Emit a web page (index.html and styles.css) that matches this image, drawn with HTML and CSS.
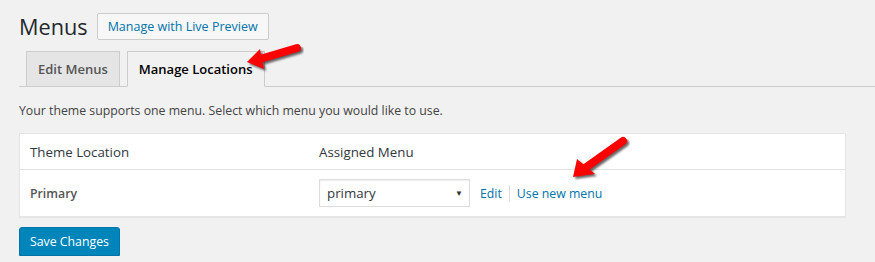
FILE: index.html
```html
<!DOCTYPE html>
<html>
<head>
    <meta charset="utf-8"/>
    <title>Menus</title>
    <link rel="stylesheet" href="styles.css">
</head>
<body>
    <div class="wrap">
        <div class="title-row">
            <h1>Menus</h1>
            <button class="btn-secondary">Manage with Live Preview</button>
        </div>
        <div class="nav-tabs">
            <a class="nav-tab">Edit Menus</a>
            <a class="nav-tab active">Manage Locations</a>
            <svg class="arrow arrow-tab" width="66" height="40" viewBox="0 0 66 40">
                <defs><filter id="blur"><feGaussianBlur stdDeviation="1.1"/></filter></defs>
                <g transform="translate(2,2)" opacity="0.6" filter="url(#blur)">
                    <path d="M57 9 L20 20" stroke="#000" stroke-width="8" stroke-linecap="round"/>
                    <polygon points="7,23 20,10 24,30" fill="#000"/>
                </g>
                <path d="M57 9 L20 20" stroke="#f00" stroke-width="8" stroke-linecap="round"/>
                <polygon points="7,23 20,10 24,30" fill="#f00"/>
            </svg>
        </div>
        <p class="intro">Your theme supports one menu. Select which menu you would like to use.</p>
        <div class="locations">
            <div class="loc-head">
                <div class="col-loc">Theme Location</div>
                <div class="col-menu">Assigned Menu</div>
            </div>
            <div class="loc-row">
                <div class="col-loc"><strong>Primary</strong></div>
                <div class="col-menu menu-controls">
                    <div class="select">primary<span class="caret">&#9660;</span></div>
                    <a class="link">Edit</a>
                    <span class="sep"></span>
                    <a class="link">Use new menu</a>
                </div>
            </div>
            <svg class="arrow arrow-row" width="80" height="56" viewBox="0 0 80 56">
                <defs><filter id="blur2"><feGaussianBlur stdDeviation="1.1"/></filter></defs>
                <g transform="translate(2,2)" opacity="0.6" filter="url(#blur2)">
                    <path d="M68 10 L30 37" stroke="#000" stroke-width="8" stroke-linecap="round"/>
                    <polygon points="18,46 22,28 40,43" fill="#000"/>
                </g>
                <path d="M68 10 L30 37" stroke="#f00" stroke-width="8" stroke-linecap="round"/>
                <polygon points="18,46 22,28 40,43" fill="#f00"/>
            </svg>
        </div>
        <button class="btn-primary">Save Changes</button>
    </div>
</body>
</html>
```

FILE: styles.css
```css
body {
    margin: 0;
    background-color: #f1f1f1;
    font-family: "Open Sans", "Noto Sans", sans-serif;
    font-size: 12.3px;
    color: #444;
}
.wrap {
    padding: 10px 0 0 19px;
}
.title-row {
    display: flex;
    align-items: center;
    gap: 9px;
    height: 30px;
    margin-top: 1px;
}
h1 {
    margin: 0;
    font-size: 21.7px;
    font-weight: 400;
    color: #23282d;
}
.btn-secondary {
    font-family: inherit;
    font-size: 12.5px;
    color: #0073aa;
    background: #f7f7f7;
    border: 1px solid #ccc;
    border-radius: 2px;
    height: 27px;
    padding: 0 10px;
    margin-top: 1px;
}
.nav-tabs {
    position: relative;
    display: flex;
    align-items: flex-end;
    margin-top: 10px;
    height: 35px;
    border-bottom: 1px solid #ccc;
}
.nav-tab {
    display: block;
    box-sizing: border-box;
    height: 36px;
    margin-bottom: -1px;
    margin-left: 7px;
    padding: 0 11px;
    line-height: 35px;
    font-size: 13px;
    font-weight: 600;
    color: #555;
    background: #e5e5e5;
    border: 1px solid #ccc;
}
.nav-tab.active {
    color: #000;
    background: #f1f1f1;
    border-bottom-color: #f1f1f1;
}
.arrow {
    position: absolute;
}
.arrow-tab {
    left: 221px;
    top: -12px;
}
.intro {
    margin: 15px 0 14px;
}
.locations {
    position: relative;
    margin-right: 29px;
    background: #fff;
    border: 1px solid #e5e5e5;
    box-shadow: 0 1px 1px rgba(0,0,0,0.04);
}
.loc-head, .loc-row {
    display: flex;
    align-items: center;
    padding: 0 10px;
}
.loc-head {
    height: 35px;
    font-size: 13.3px;
    color: #32373c;
    border-bottom: 1px solid #e1e1e1;
}
.loc-row {
    height: 46px;
}
.col-loc {
    width: 289px;
}
.loc-row strong {
    font-weight: 600;
    color: #555;
}
.menu-controls {
    display: flex;
    align-items: center;
}
.select {
    box-sizing: border-box;
    width: 151px;
    height: 28px;
    padding: 0 7px;
    line-height: 26px;
    font-size: 13.3px;
    color: #32373c;
    border: 1px solid #ddd;
    box-shadow: inset 0 1px 2px rgba(0,0,0,0.07);
    position: relative;
}
.caret {
    position: absolute;
    right: 6px;
    top: 0;
    font-size: 8px;
    color: #333;
}
.link {
    color: #0073aa;
}
.select + .link {
    margin-left: 10px;
}
.sep {
    width: 1px;
    height: 17px;
    background: #ddd;
    margin: 0 7px;
}
.arrow-row {
    left: 535px;
    top: -3px;
}
.btn-primary {
    display: block;
    margin-top: 10px;
    font-family: inherit;
    font-size: 12.3px;
    color: #fff;
    background: #0085ba;
    border: 1px solid #0073aa;
    border-radius: 3px;
    height: 29px;
    padding: 0 10px;
    box-shadow: 0 1px 0 #006799;
}
```
